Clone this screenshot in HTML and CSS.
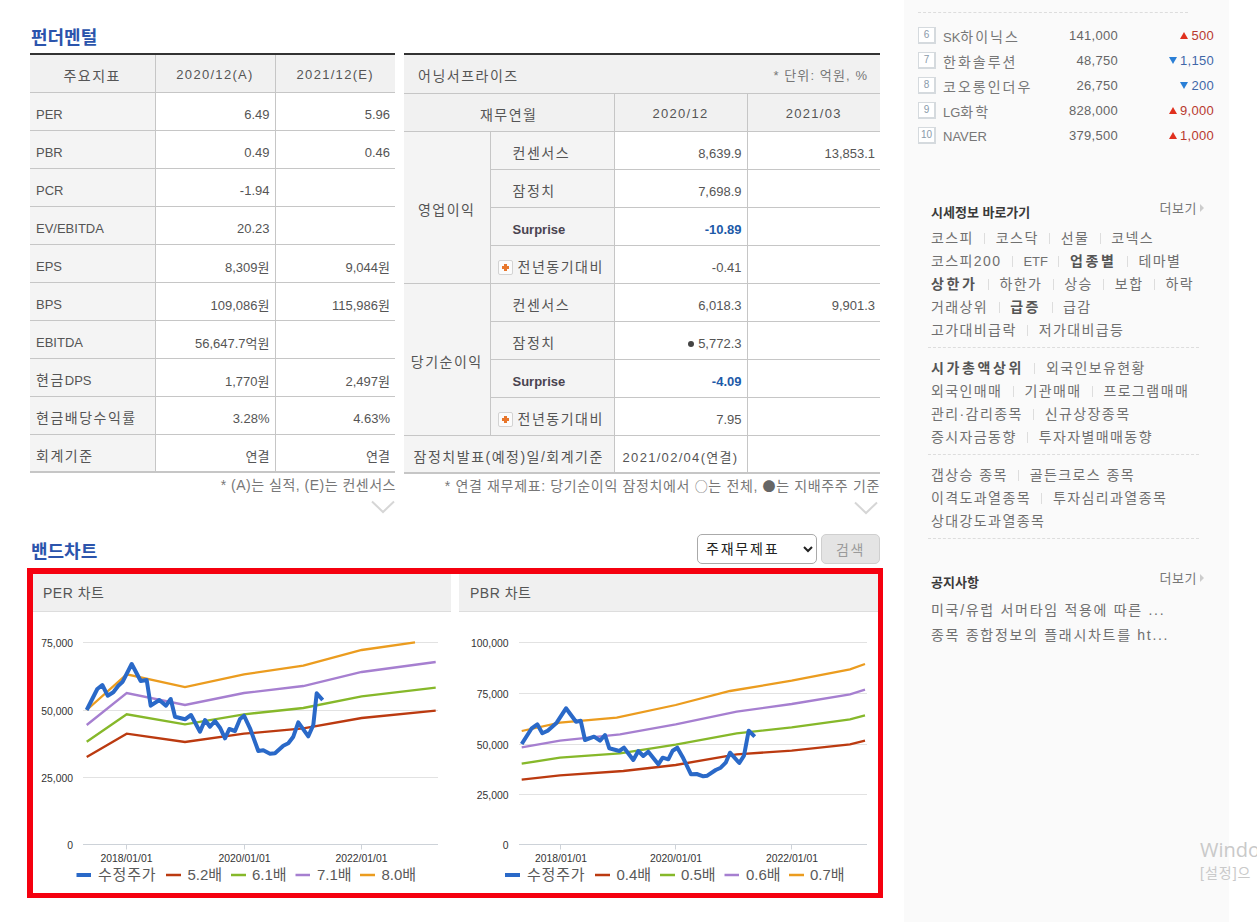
FILE: index.html
```html
<!DOCTYPE html>
<html lang="ko">
<head>
    <meta charset="UTF-8">
    <title>기업실적분석</title>
    <link rel="stylesheet" href="styles.css">
</head>
<body>
<div class="page">
    <main class="main">
        <h2 class="section-title">펀더멘털</h2>
        <div class="fund-row">
            <!-- 주요지표 -->
            <div class="fund-left">
                <table class="grid left-grid">
                    <colgroup><col class="c-125"><col class="c-120"><col class="c-120"></colgroup>
                    <tr class="head-row">
                        <th class="ko center">주요지표</th>
                        <th class="wide center">2020/12(A)</th>
                        <th class="wide center">2021/12(E)</th>
                    </tr>
                    <tr><th>PER</th><td>6.49</td><td>5.96</td></tr>
                    <tr><th>PBR</th><td>0.49</td><td>0.46</td></tr>
                    <tr><th>PCR</th><td>-1.94</td><td></td></tr>
                    <tr><th>EV/EBITDA</th><td>20.23</td><td></td></tr>
                    <tr><th>EPS</th><td>8,309원</td><td>9,044원</td></tr>
                    <tr><th>BPS</th><td>109,086원</td><td>115,986원</td></tr>
                    <tr><th>EBITDA</th><td>56,647.7억원</td><td></td></tr>
                    <tr><th class="mixed"><span class="ko">현금</span>DPS</th><td>1,770원</td><td>2,497원</td></tr>
                    <tr><th class="ko">현금배당수익률</th><td>3.28%</td><td>4.63%</td></tr>
                    <tr><th class="ko">회계기준</th><td>연결</td><td>연결</td></tr>
                </table>
                <p class="note">* (A)는 실적, (E)는 컨센서스</p>
                <svg class="chevron" width="24" height="14" viewBox="0 0 24 14"><path d="M1 1.5 L12 12 L23 1.5"/></svg>
            </div>

            <!-- 어닝서프라이즈 -->
            <div class="fund-right">
                <table class="grid right-grid">
                    <colgroup><col class="c-86"><col class="c-124"><col class="c-133"><col class="c-133"></colgroup>
                    <tr class="head-row head-tall">
                        <th colspan="4" class="ko surprise-head">어닝서프라이즈<span class="unit">* 단위: 억원, %</span></th>
                    </tr>
                    <tr class="head-row">
                        <th colspan="2" class="ko center">재무연월</th>
                        <th class="wide center">2020/12</th>
                        <th class="wide center">2021/03</th>
                    </tr>
                    <tr>
                        <th rowspan="4" class="ko center">영업이익</th>
                        <th class="ko sub">컨센서스</th><td>8,639.9</td><td>13,853.1</td>
                    </tr>
                    <tr><th class="ko sub">잠정치</th><td>7,698.9</td><td></td></tr>
                    <tr><th class="sub strong">Surprise</th><td class="down">-10.89</td><td></td></tr>
                    <tr>
                        <th class="ko sub-icon"><span class="plus-icon"></span>전년동기대비</th><td>-0.41</td><td></td>
                    </tr>
                    <tr>
                        <th rowspan="4" class="ko center">당기순이익</th>
                        <th class="ko sub">컨센서스</th><td>6,018.3</td><td>9,901.3</td>
                    </tr>
                    <tr><th class="ko sub">잠정치</th><td><span class="dot"></span>5,772.3</td><td></td></tr>
                    <tr><th class="sub strong">Surprise</th><td class="down">-4.09</td><td></td></tr>
                    <tr>
                        <th class="ko sub-icon"><span class="plus-icon"></span>전년동기대비</th><td>7.95</td><td></td>
                    </tr>
                    <tr>
                        <th colspan="2" class="ko center">잠정치발표(예정)일/회계기준</th>
                        <td class="wide center">2021/02/04(연결)</td><td></td>
                    </tr>
                </table>
                <p class="note">* 연결 재무제표: 당기순이익 잠정치에서 <span class="mark">○</span>는 전체, <span class="mark mark-on">●</span>는 지배주주 기준</p>
                <svg class="chevron chevron-right" width="24" height="14" viewBox="0 0 24 14"><path d="M1 1.5 L12 12 L23 1.5"/></svg>
            </div>
        </div>

        <div class="band-head">
            <h2 class="section-title">밴드차트</h2>
            <form class="band-form">
                <select class="band-select"><option>주재무제표</option></select>
                <button type="button" class="band-btn" disabled>검색</button>
            </form>
        </div>

        <!-- 차트 영역 -->
        <div class="chart-box">
            <section class="chart-panel">
                <h3 class="chart-title">PER 차트</h3>
                <svg class="chart" width="418" height="281" viewBox="33 612 418 281">
                    <g class="gridline">
                        <path d="M83 642.5H438M83 710.5H438M83 777.5H438"/>
                    </g>
                    <path class="axis" d="M83 844.5H438M126.5 844.5v5M244.5 844.5v5M361.5 844.5v5"/>
                    <g class="tick">
                        <text x="73" y="647" text-anchor="end">75,000</text>
                        <text x="73" y="715" text-anchor="end">50,000</text>
                        <text x="73" y="782" text-anchor="end">25,000</text>
                        <text x="73" y="849" text-anchor="end">0</text>
                        <text x="126.5" y="862" text-anchor="middle">2018/01/01</text>
                        <text x="244.5" y="862" text-anchor="middle">2020/01/01</text>
                        <text x="361.5" y="862" text-anchor="middle">2022/01/01</text>
                    </g>
                    <polyline class="s-red" points="86.7,757 126.7,733.7 185,742 244,733.7 303.3,728.3 361.7,718 435.7,710.7"/>
                    <polyline class="s-green" points="86.7,741.7 126.7,714.3 185,724.3 244,714.3 303.3,708 361.7,696.3 435.7,687.7"/>
                    <polyline class="s-purple" points="86.7,725 126.7,693 185,705 244,693 303.3,686 361.7,672 435.7,662"/>
                    <polyline class="s-orange" points="86.7,710 126.7,674.3 185,687 244,674.3 303.3,665.7 361.7,650 415,642.3"/>
                    <polyline class="s-blue" points="86.7,710 97.3,689 102.3,685 107.7,695.7 113.3,692.3 118.3,685.7 122.7,681.7 131.7,664 140.7,681 146.7,680 150.7,705.7 159.3,700 166,705.7 170.7,699 175,716.7 185,719.3 191,715 200,731.7 205,720 210,726.7 215,721 220,727.7 225,738.3 229.3,729 235,731 240,719 244,715.7 250,728.3 258.3,751 263.3,750.3 270,753.7 275,753.3 283.3,745.7 288.3,743.3 293.3,736.7 298.3,722.3 308.3,736.3 313.3,725 316.7,693.3 322.7,700"/>
                    <g class="legend">
                        <path class="s-blue" d="M76.5 875H91"/><text x="98" y="880" class="legend-ko">수정주가</text>
                        <path class="s-red" d="M166 875H181"/><text x="187.5" y="880">5.2배</text>
                        <path class="s-green" d="M231 875H246"/><text x="252" y="880">6.1배</text>
                        <path class="s-purple" d="M295.5 875H310"/><text x="317" y="880">7.1배</text>
                        <path class="s-orange" d="M360 875H375"/><text x="381.5" y="880">8.0배</text>
                    </g>
                </svg>
            </section>
            <section class="chart-panel chart-panel-right">
                <h3 class="chart-title">PBR 차트</h3>
                <svg class="chart" width="419" height="281" viewBox="459 612 419 281">
                    <g class="gridline">
                        <path d="M519 642.5H867M519 693.5H867M519 744.5H867M519 794.5H867"/>
                    </g>
                    <path class="axis" d="M519 844.5H867M560.5 844.5v5M675.5 844.5v5M791.5 844.5v5"/>
                    <g class="tick">
                        <text x="508.5" y="647" text-anchor="end">100,000</text>
                        <text x="508.5" y="698" text-anchor="end">75,000</text>
                        <text x="508.5" y="749" text-anchor="end">50,000</text>
                        <text x="508.5" y="799" text-anchor="end">25,000</text>
                        <text x="508.5" y="849" text-anchor="end">0</text>
                        <text x="561" y="862" text-anchor="middle">2018/01/01</text>
                        <text x="676" y="862" text-anchor="middle">2020/01/01</text>
                        <text x="792" y="862" text-anchor="middle">2022/01/01</text>
                    </g>
                    <polyline class="s-red" points="521.7,779.7 560,775.3 623.3,771 675.7,765 736.7,754.3 791.7,750.7 850,744.3 865,740.7"/>
                    <polyline class="s-green" points="521.7,763.7 560,757.7 620,753.3 675.7,744.7 736.7,733.3 791.7,727.3 850,719.3 865,715.3"/>
                    <polyline class="s-purple" points="521.7,747.3 560,740.7 620,734.3 675.7,724.3 736.7,711.7 791.7,704 850,694.3 865,689.7"/>
                    <polyline class="s-orange" points="521.7,731 560,722.7 616.7,717.7 675.7,705 730,691 791.7,680.7 850,669.3 865,664"/>
                    <polyline class="s-blue" points="521.7,744 531.7,728.3 537.3,724.3 542.3,733.3 547.7,730.7 556.7,722.7 566,708.3 576,721.7 580.7,720.7 585,740 594,736.7 600,740.7 605,735 609.3,748.3 619.3,751 624,747.7 633.3,760 638.3,751 643.3,756 648.3,751.7 658.3,764.3 662.7,757.7 668.3,759.3 672.7,750.7 677.3,747.7 683.3,758.3 691,774.3 696.7,774 703.3,776.3 707.3,775.7 715.7,770 720.7,767.7 725.7,762.7 730,752.7 739.3,763 744,755.7 748.7,730.7 754.7,736.7"/>
                    <g class="legend">
                        <path class="s-blue" d="M505 875H520"/><text x="527" y="880" class="legend-ko">수정주가</text>
                        <path class="s-red" d="M595 875H610"/><text x="616.5" y="880">0.4배</text>
                        <path class="s-green" d="M660 875H675"/><text x="681" y="880">0.5배</text>
                        <path class="s-purple" d="M724.5 875H739"/><text x="746" y="880">0.6배</text>
                        <path class="s-orange" d="M789 875H804"/><text x="810" y="880">0.7배</text>
                    </g>
                </svg>
            </section>
        </div>
    </main>

    <aside class="side">
        <ul class="rank-list">
            <li class="rank-row"><span class="rank-no">6</span><span class="rank-name"><span class="latin">SK</span>하이닉스</span><span class="rank-price">141,000</span><span class="rank-diff up"><i class="tri-up"></i>500</span></li>
            <li class="rank-row"><span class="rank-no">7</span><span class="rank-name">한화솔루션</span><span class="rank-price">48,750</span><span class="rank-diff dn"><i class="tri-dn"></i>1,150</span></li>
            <li class="rank-row"><span class="rank-no">8</span><span class="rank-name">코오롱인더우</span><span class="rank-price">26,750</span><span class="rank-diff dn"><i class="tri-dn"></i>200</span></li>
            <li class="rank-row"><span class="rank-no">9</span><span class="rank-name"><span class="latin">LG</span>화학</span><span class="rank-price">828,000</span><span class="rank-diff up"><i class="tri-up"></i>9,000</span></li>
            <li class="rank-row"><span class="rank-no">10</span><span class="rank-name"><span class="latin">NAVER</span></span><span class="rank-price">379,500</span><span class="rank-diff up"><i class="tri-up"></i>1,000</span></li>
        </ul>

        <div class="side-head side-head-first">
            <strong class="side-title">시세정보 바로가기</strong>
            <a class="more">더보기</a>
        </div>
        <div class="link-group">
            <p class="links"><a>코스피</a><a>코스닥</a><a>선물</a><a>코넥스</a></p>
            <p class="links"><a>코스피200</a><a class="latin">ETF</a><a class="on">업종별</a><a>테마별</a></p>
            <p class="links"><a class="on">상한가</a><a>하한가</a><a>상승</a><a>보합</a><a>하락</a></p>
            <p class="links"><a>거래상위</a><a class="on">급증</a><a>급감</a></p>
            <p class="links"><a>고가대비급락</a><a>저가대비급등</a></p>
        </div>
        <div class="link-group">
            <p class="links"><a class="on">시가총액상위</a><a>외국인보유현황</a></p>
            <p class="links"><a>외국인매매</a><a>기관매매</a><a>프로그램매매</a></p>
            <p class="links"><a>관리·감리종목</a><a>신규상장종목</a></p>
            <p class="links"><a>증시자금동향</a><a>투자자별매매동향</a></p>
        </div>
        <div class="link-group">
            <p class="links"><a>갭상승 종목</a><a>골든크로스 종목</a></p>
            <p class="links"><a>이격도과열종목</a><a>투자심리과열종목</a></p>
            <p class="links"><a>상대강도과열종목</a></p>
        </div>

        <div class="side-head side-head-notice">
            <strong class="side-title">공지사항</strong>
            <a class="more">더보기</a>
        </div>
        <ul class="notice-list">
            <li>미국/유럽 서머타임 적용에 따른 ...</li>
            <li>종목 종합정보의 플래시차트를 ht...</li>
        </ul>
    </aside>
</div>

<!-- 정품 인증 워터마크 -->
<div class="watermark">
    <p class="wm-big">Windo</p>
    <p class="wm-small">[설정]으</p>
</div>
</body>
</html>
```

FILE: styles.css
```css
/* Reset */
html, body, h2, h3, p, ul {
    margin: 0;
    padding: 0;
}

html, body {
    height: 922px;
    overflow: hidden;
}

body {
    position: relative;
    background: #fff;
    font-family: "Liberation Sans", "Noto Sans CJK KR", sans-serif;
    font-size: 13px;
    color: #555;
}

ul {
    list-style: none;
}

.page {
    display: flex;
    height: 922px;
}

/* Main column */
.main {
    width: 874px;
    padding-left: 30px;
}

.section-title {
    height: 24px;
    margin-top: 26px;
    margin-bottom: 3px;
    padding-left: 1px;
    font-size: 18px;
    line-height: 24px;
    font-weight: 700;
    color: #2b54ac;
}

.fund-row {
    display: flex;
    gap: 9px;
    width: 850px;
}

.fund-left {
    width: 365px;
}

.fund-right {
    width: 476px;
}

/* Tables */
.grid {
    width: 100%;
    table-layout: fixed;
    border-collapse: collapse;
    border-top: 2px solid #333;
    border-bottom: 2px solid #c6c6c6;
}

.c-125 { width: 125px; }
.c-120 { width: 120px; }
.c-86 { width: 86px; }
.c-124 { width: 124px; }
.c-133 { width: 133px; }

.grid tr {
    height: 38px;
}

.grid .head-tall {
    height: 39px;
}

.grid th,
.grid td {
    padding: 6px 5px 0;
    border: 1px solid #c6c6c6;
    font-weight: 400;
    white-space: nowrap;
}

.grid tr > :first-child {
    border-left: 0;
}

.grid tr > :last-child {
    border-right: 0;
}

.grid tr:first-child > * {
    border-top: 0;
}

.grid th {
    padding-left: 6px;
    background: #f4f4f4;
    text-align: left;
}

.grid td {
    text-align: right;
}

.grid th.ko {
    padding-top: 4px;
}

.grid th.mixed {
    padding-top: 3px;
}

.grid .head-row th {
    padding-top: 3px;
    background: #f1f1f1;
}

.grid .center {
    padding-left: 0;
    padding-right: 0;
    text-align: center;
}

.ko {
    font-size: 14px;
    letter-spacing: 1.5px;
}

.wide {
    letter-spacing: 1.3px;
}

.grid .surprise-head {
    padding: 0 12px 0 14px;
}

.unit {
    float: right;
    font-size: 13px;
    letter-spacing: 1.1px;
    color: #777;
}

.grid .sub {
    padding-left: 22px;
}

.grid .strong {
    font-weight: 700;
    color: #4a4350;
}

.grid .sub-icon {
    padding-left: 7px;
    padding-top: 2px;
}

.plus-icon {
    position: relative;
    display: inline-block;
    width: 13px;
    height: 13px;
    margin-right: 5px;
    border: 1px solid #d3d3d3;
    border-radius: 2px;
    background: #fbfbfb;
    vertical-align: -3px;
}

.plus-icon::before {
    content: "";
    position: absolute;
    left: 5px;
    top: 3px;
    width: 3px;
    height: 7px;
    background: #e8762b;
}

.plus-icon::after {
    content: "";
    position: absolute;
    left: 3px;
    top: 5px;
    width: 7px;
    height: 3px;
    background: #e8762b;
}

.grid .down {
    font-weight: 700;
    color: #1d5aa8;
}

.dot {
    display: inline-block;
    width: 6px;
    height: 6px;
    margin-right: 4px;
    border-radius: 50%;
    background: #444;
    vertical-align: 1px;
}

.note {
    height: 24px;
    margin-right: -1px;
    font-size: 14px;
    line-height: 24px;
    letter-spacing: 0.5px;
    color: #777;
    text-align: right;
    white-space: nowrap;
}

.fund-right .note {
    margin-right: 0;
    letter-spacing: 0.65px;
}

.mark {
    font-family: "Noto Sans CJK KR", sans-serif;
    font-size: 13px;
}

.mark-on {
    color: #666;
}

.chevron {
    display: block;
    margin: 3px 0 0 auto;
    fill: none;
    stroke: #d6d6d6;
    stroke-width: 2;
}

.chevron-right {
    margin-right: 2px;
}

/* Band chart header */
.band-head {
    display: flex;
    justify-content: space-between;
    width: 850px;
    height: 30px;
    margin-top: 19px;
}

.band-head .section-title {
    margin-top: 6px;
    margin-bottom: 0;
}

.band-form {
    display: flex;
    gap: 4px;
}

.band-select {
    width: 120px;
    height: 30px;
    padding-left: 4px;
    border: 1px solid #aaa;
    border-radius: 5px;
    background: #fff;
    font-family: inherit;
    font-size: 14px;
    letter-spacing: 1.8px;
    color: #222;
}

.band-btn {
    width: 59px;
    height: 30px;
    padding: 0;
    border: 1px solid #cfcfcf;
    border-radius: 5px;
    background: #e4e4e4;
    font-family: inherit;
    font-size: 14px;
    letter-spacing: 1.5px;
    color: #9a9a9a;
}

/* Chart box, the red outline is part of the capture */
.chart-box {
    display: flex;
    gap: 8px;
    box-sizing: border-box;
    width: 856px;
    height: 330px;
    margin: 4px 0 0 -3px;
    border: solid #f5000f;
    border-width: 6px 5px 5px 6px;
    background: #fff;
}

.chart-panel {
    width: 418px;
}

.chart-panel-right {
    width: 419px;
}

.chart-title {
    box-sizing: border-box;
    height: 38px;
    padding-left: 10px;
    border-bottom: 1px solid #ddd;
    background: #f0f0f0;
    font-size: 14px;
    line-height: 38px;
    font-weight: 400;
    letter-spacing: 0.5px;
    color: #555;
}

.chart-panel-right .chart-title {
    padding-left: 11px;
}

.chart {
    display: block;
}

.chart polyline,
.chart path {
    fill: none;
}

.gridline {
    stroke: #e2e2e2;
    stroke-width: 1;
}

.axis {
    stroke: #cdd2d8;
    stroke-width: 1;
}

.tick text {
    font-size: 10.4px;
    fill: #333;
}

.legend text {
    font-size: 15px;
    fill: #5a5a5a;
}

.legend .legend-ko {
    letter-spacing: 0.8px;
}

.s-red { stroke: #bb3a10; stroke-width: 2.3; }
.s-green { stroke: #86b82a; stroke-width: 2.3; }
.s-purple { stroke: #a67fd0; stroke-width: 2.3; }
.s-orange { stroke: #eb9c1f; stroke-width: 2.3; }
.s-blue { stroke: #2a69c8; stroke-width: 4; stroke-linejoin: round; }

.legend .s-red,
.legend .s-green,
.legend .s-purple,
.legend .s-orange { stroke-width: 2.5; }

/* Sidebar */
.side {
    box-sizing: border-box;
    width: 325px;
    height: 922px;
    padding: 12px 0 0 14px;
    background: #fafafa;
}

.rank-list {
    width: 270px;
    padding-top: 10px;
    border-top: 1px dashed #ddd;
}

.rank-row {
    display: flex;
    align-items: center;
    width: 296px;
    height: 25px;
    font-size: 13px;
    letter-spacing: 0.3px;
    color: #666;
}

.rank-no {
    box-sizing: border-box;
    width: 18px;
    height: 17px;
    border: 1px solid #d5dade;
    border-bottom-width: 2px;
    border-right-width: 2px;
    background: #fff;
    font-size: 10px;
    line-height: 14px;
    letter-spacing: 0;
    text-align: center;
    color: #8a9aaa;
}

.rank-name {
    width: 117px;
    margin-left: 7px;
    font-size: 14px;
    letter-spacing: 2px;
    color: #777;
}

.latin {
    font-size: 13px;
    letter-spacing: 0;
}

.rank-price {
    width: 58px;
    text-align: right;
}

.rank-diff {
    width: 96px;
    text-align: right;
}

.up { color: #b8392e; }
.dn { color: #3f67a8; }

.tri-up,
.tri-dn {
    display: inline-block;
    width: 0;
    height: 0;
    margin-right: 3px;
    border-left: 4px solid transparent;
    border-right: 4px solid transparent;
    vertical-align: 1px;
}

.tri-up { border-bottom: 7px solid #e0301e; }
.tri-dn { border-top: 7px solid #2a7fd6; }

.side-head {
    display: flex;
    justify-content: space-between;
    box-sizing: border-box;
    width: 276px;
    height: 18px;
    padding-left: 3px;
    margin-left: 10px;
}

.side-head-first {
    margin-top: 52px;
}

.side-head-notice {
    margin-top: 31px;
}

.side-title {
    padding-top: 4px;
    font-size: 13px;
    line-height: 18px;
    color: #3a3a3a;
}

.more {
    font-size: 13px;
    line-height: 18px;
    letter-spacing: 0.5px;
    color: #777;
}

.more::after {
    content: "";
    display: inline-block;
    width: 0;
    height: 0;
    margin-left: 3px;
    border-top: 4px solid transparent;
    border-bottom: 4px solid transparent;
    border-left: 4px solid #ccc;
    vertical-align: 1px;
}

.link-group {
    box-sizing: border-box;
    width: 271px;
    margin-left: 10px;
    padding: 9px 0 5px 3px;
    border-bottom: 1px dashed #ddd;
}

.links {
    display: flex;
    height: 23px;
    font-size: 14px;
    line-height: 23px;
    letter-spacing: 1.4px;
    color: #707070;
    white-space: nowrap;
}

.links a + a::before {
    content: "";
    display: inline-block;
    width: 1px;
    height: 11px;
    margin: 0 10.5px;
    background: #ddd;
    vertical-align: -1px;
}

.links .on {
    font-weight: 700;
    letter-spacing: 2.6px;
    color: #555;
}

.notice-list {
    margin-left: 10px;
    padding: 10px 0 0 3px;
}

.notice-list li {
    height: 25px;
    font-size: 14px;
    line-height: 25px;
    letter-spacing: 1.7px;
    color: #707070;
    white-space: nowrap;
}

/* Windows watermark at the window edge */
.watermark {
    position: absolute;
    left: 1200px;
    top: 836px;
    white-space: nowrap;
    color: #c9c9c9;
}

.wm-big {
    font-family: "Open Sans", sans-serif;
    font-size: 20px;
    line-height: 27px;
}

.wm-small {
    font-size: 14px;
    line-height: 20px;
    letter-spacing: 1px;
}
```
